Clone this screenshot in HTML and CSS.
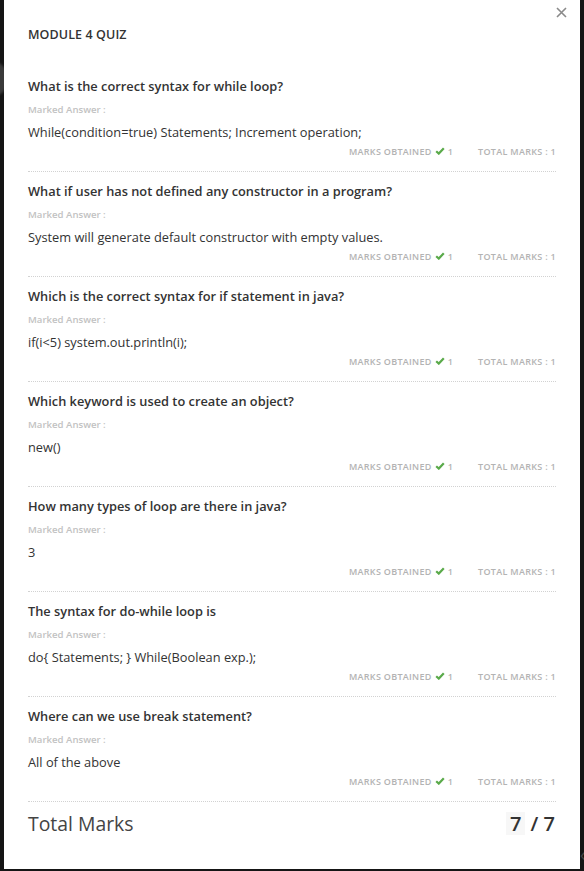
FILE: index.html
```html
<!DOCTYPE html>
<html>
<head>
<meta charset="utf-8">
<link rel="stylesheet" href="styles.css">
</head>
<body>
<div class="backdrop">
  <div class="ghost-tab"></div>
  <div class="ghost-arrow">&lsaquo;</div>
  <div class="modal">
    <button class="close" aria-label="Close">
      <svg width="11" height="11" viewBox="0 0 11 11"><path d="M1 1L10 10M10 1L1 10" stroke="#8a8a8a" stroke-width="1.6" fill="none"/></svg>
    </button>
    <h2 class="title">MODULE 4 QUIZ</h2>
    <div class="list">
      <div class="item">
        <div class="q">What is the correct syntax for while loop?</div>
        <div class="label">Marked Answer :</div>
        <div class="a">While(condition=true) Statements; Increment operation;</div>
        <div class="marks"><span class="m">MARKS OBTAINED <svg class="chk" width="10" height="8" viewBox="0 0 10 8"><path d="M1.2 4.2L3.8 6.6L8.8 1.2" stroke="#5aaa4a" stroke-width="2.2" fill="none"/></svg> 1</span><span class="m">TOTAL MARKS : 1</span></div>
      </div>
      <div class="item">
        <div class="q">What if user has not defined any constructor in a program?</div>
        <div class="label">Marked Answer :</div>
        <div class="a">System will generate default constructor with empty values.</div>
        <div class="marks"><span class="m">MARKS OBTAINED <svg class="chk" width="10" height="8" viewBox="0 0 10 8"><path d="M1.2 4.2L3.8 6.6L8.8 1.2" stroke="#5aaa4a" stroke-width="2.2" fill="none"/></svg> 1</span><span class="m">TOTAL MARKS : 1</span></div>
      </div>
      <div class="item">
        <div class="q">Which is the correct syntax for if statement in java?</div>
        <div class="label">Marked Answer :</div>
        <div class="a">if(i&lt;5) system.out.println(i);</div>
        <div class="marks"><span class="m">MARKS OBTAINED <svg class="chk" width="10" height="8" viewBox="0 0 10 8"><path d="M1.2 4.2L3.8 6.6L8.8 1.2" stroke="#5aaa4a" stroke-width="2.2" fill="none"/></svg> 1</span><span class="m">TOTAL MARKS : 1</span></div>
      </div>
      <div class="item">
        <div class="q">Which keyword is used to create an object?</div>
        <div class="label">Marked Answer :</div>
        <div class="a">new()</div>
        <div class="marks"><span class="m">MARKS OBTAINED <svg class="chk" width="10" height="8" viewBox="0 0 10 8"><path d="M1.2 4.2L3.8 6.6L8.8 1.2" stroke="#5aaa4a" stroke-width="2.2" fill="none"/></svg> 1</span><span class="m">TOTAL MARKS : 1</span></div>
      </div>
      <div class="item">
        <div class="q">How many types of loop are there in java?</div>
        <div class="label">Marked Answer :</div>
        <div class="a">3</div>
        <div class="marks"><span class="m">MARKS OBTAINED <svg class="chk" width="10" height="8" viewBox="0 0 10 8"><path d="M1.2 4.2L3.8 6.6L8.8 1.2" stroke="#5aaa4a" stroke-width="2.2" fill="none"/></svg> 1</span><span class="m">TOTAL MARKS : 1</span></div>
      </div>
      <div class="item">
        <div class="q">The syntax for do-while loop is</div>
        <div class="label">Marked Answer :</div>
        <div class="a">do{ Statements; } While(Boolean exp.);</div>
        <div class="marks"><span class="m">MARKS OBTAINED <svg class="chk" width="10" height="8" viewBox="0 0 10 8"><path d="M1.2 4.2L3.8 6.6L8.8 1.2" stroke="#5aaa4a" stroke-width="2.2" fill="none"/></svg> 1</span><span class="m">TOTAL MARKS : 1</span></div>
      </div>
      <div class="item">
        <div class="q">Where can we use break statement?</div>
        <div class="label">Marked Answer :</div>
        <div class="a">All of the above</div>
        <div class="marks"><span class="m">MARKS OBTAINED <svg class="chk" width="10" height="8" viewBox="0 0 10 8"><path d="M1.2 4.2L3.8 6.6L8.8 1.2" stroke="#5aaa4a" stroke-width="2.2" fill="none"/></svg> 1</span><span class="m">TOTAL MARKS : 1</span></div>
      </div>
    </div>
    <div class="footer">
      <span class="total-label">Total Marks</span>
      <span class="score"><span class="got">7</span> / 7</span>
    </div>
  </div>
</div>
</body>
</html>
```

FILE: styles.css
```css
* { box-sizing: border-box; }
html, body { margin: 0; padding: 0; }
body {
  background: #151515;
  font-family: "Open Sans", "Noto Sans", sans-serif;
  width: 584px;
  height: 871px;
  overflow: hidden;
}
.backdrop {
  position: relative;
  width: 584px;
  height: 871px;
  padding-left: 4px;
}
.ghost-tab {
  position: absolute;
  left: -20px;
  top: 62px;
  width: 26px;
  height: 34px;
  border-radius: 12px;
  background: #3a3a3a;
  filter: blur(1px);
}
.ghost-arrow {
  position: absolute;
  left: 580px;
  top: 844px;
  color: #444;
  font-size: 18px;
  line-height: 20px;
}
.modal {
  position: relative;
  width: 576px;
  height: 869px;
  background: #fff;
  padding: 25px 24px 0 24px;
}
.close {
  position: absolute;
  right: 12px;
  top: 6px;
  border: 0;
  background: transparent;
  padding: 0;
  width: 13px;
  height: 13px;
  display: flex;
  align-items: center;
  justify-content: center;
}
.title {
  margin: 0 0 22px 0;
  font-size: 12.5px;
  line-height: 20px;
  font-weight: 600;
  color: #333;
  letter-spacing: 0.1px;
}
.item {
  padding: 9px 0 13px 0;
  border-bottom: 1px dotted #d2d2d2;
}
.q {
  font-size: 12.8px;
  line-height: 20px;
  font-weight: 600;
  color: #333;
}
.label {
  margin-top: 7px;
  font-size: 9.6px;
  line-height: 14px;
  font-weight: 600;
  color: #c2c2c2;
}
.a {
  margin-top: 5px;
  font-size: 12.8px;
  line-height: 20px;
  color: #333;
}
.marks {
  margin-top: 4px;
  display: flex;
  justify-content: flex-end;
  gap: 25px;
  font-size: 9px;
  line-height: 12px;
  font-weight: 600;
  color: #b3b3b3;
  letter-spacing: 0.3px;
}
.m {
  display: inline-flex;
  align-items: center;
  gap: 3px;
}
.chk { display: block; margin-top: -2px; }
.footer {
  padding-top: 8px;
  display: flex;
  justify-content: space-between;
  align-items: center;
}
.total-label {
  font-size: 19.4px;
  line-height: 28px;
  color: #444;
}
.score {
  font-size: 20px;
  line-height: 28px;
  font-weight: 600;
  color: #333;
  padding-right: 1px;
}
.got {
  display: inline-block;
  background: #f7f7f7;
  padding: 0 4px;
  line-height: 23px;
}
```
